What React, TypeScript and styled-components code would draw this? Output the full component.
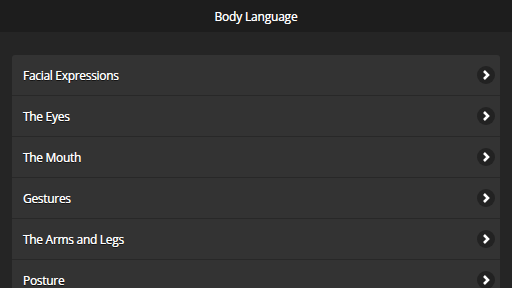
import React from 'react'
import styled, { createGlobalStyle } from 'styled-components'

const GlobalStyle = createGlobalStyle`
  html, body {
    margin: 0;
    padding: 0;
    background: #252525;
    font-family: 'Open Sans', 'DejaVu Sans', sans-serif;
    color: #fff;
  }
`

const topics = [
  'Facial Expressions',
  'The Eyes',
  'The Mouth',
  'Gestures',
  'The Arms and Legs',
  'Posture',
]

const ChevronIcon = () => (
  <svg width='10' height='12' viewBox='0 0 10 12'>
    <path d='M3 2 L7 6 L3 10' fill='none' stroke='#fff' strokeWidth='2.6' />
  </svg>
)

const App = () => {
  return (
    <Page>
      <GlobalStyle />
      <Header>Body Language</Header>
      <Content>
        <List>
          {topics.map(topic => (
            <Row key={topic}>
              <span>{topic}</span>
              <Arrow>
                <ChevronIcon />
              </Arrow>
            </Row>
          ))}
        </List>
      </Content>
    </Page>
  )
}

const Page = styled.div`
  width: 512px;
  height: 288px;
  overflow: hidden;
  background: #252525;
`

const Header = styled.header`
  height: 32px;
  background: #1d1d1d;
  display: flex;
  align-items: center;
  justify-content: center;
  font-size: 12px;
  letter-spacing: -0.2px;
  text-shadow: 0 0 0.5px #fff;
`

const Content = styled.main`
  padding: 23px 12px;
`

const List = styled.ul`
  margin: 0;
  padding: 0;
  list-style: none;
  background: #333333;
  border-radius: 3px;
  overflow: hidden;
`

const Row = styled.li`
  height: 40px;
  display: flex;
  align-items: center;
  justify-content: space-between;
  padding: 0 5px 0 11px;
  border-bottom: 1px solid #282828;
  font-size: 12px;
  letter-spacing: -0.3px;
  text-shadow: 0 0 0.5px #fff, 0 1px 0 #111;
`

const Arrow = styled.div`
  width: 18px;
  height: 18px;
  border-radius: 50%;
  background: #222222;
  display: flex;
  align-items: center;
  justify-content: center;
`

export default App
